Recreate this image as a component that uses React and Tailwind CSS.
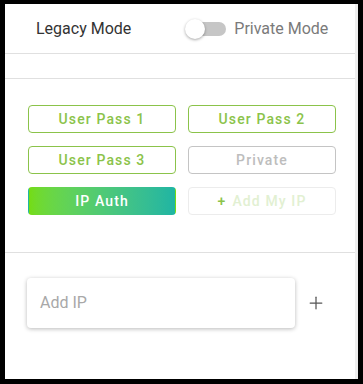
import { Plus } from "lucide-react";

const PassButton = ({ label, variant }) => {
  const styles = {
    outline: "border-[#8bc34a] text-[#8bc34a]",
    muted: "border-[#c4c4c4] text-[#bdbdbd]",
    faint: "border-[#ececec] text-[#e2f0d2]",
    active:
      "border-transparent text-white bg-gradient-to-r from-[#74dc12] to-[#1fb5a3]",
  };
  return (
    <button
      className={`h-[28px] rounded-[4px] border text-[14px] font-medium tracking-[0.08em] flex items-center justify-center ${styles[variant]}`}
    >
      {variant === "faint" ? (
        <>
          <span className="text-[#8bc34a] mr-[6px]">+</span>
          {label}
        </>
      ) : (
        label
      )}
    </button>
  );
};

const App = () => {
  return (
    <div
      className="w-[363px] h-[384px] bg-black pl-[5px] pt-[4px]"
      style={{ fontFamily: "Roboto, 'Liberation Sans', sans-serif" }}
    >
      <div className="w-[353px] h-[375px] bg-white border-r-[3px] border-[#eeeeee] flex flex-col">
        {/* header */}
        <div className="h-[50px] flex items-center border-b border-[#e0e0e0] pl-[31px]">
          <span className="text-[16px] text-[#333333]">Legacy Mode</span>
          <div className="ml-[57px] flex items-center">
            <div className="relative w-[38px] h-[14px] rounded-full bg-[#c6c6c6]">
              <div className="absolute -left-[3px] -top-[3px] w-[20px] h-[20px] rounded-full bg-white shadow-[0_1px_3px_rgba(0,0,0,0.35)]" />
            </div>
            <span className="ml-[8px] text-[16px] text-[#7a7a7a]">
              Private Mode
            </span>
          </div>
        </div>

        <div className="h-[25px] border-b border-[#e0e0e0]" />

        {/* auth buttons */}
        <div className="pt-[26px] pb-[37px] pl-[23px] border-b border-[#e0e0e0]">
          <div className="grid grid-cols-[148px_148px] gap-x-[12px] gap-y-[13px]">
            <PassButton label="User Pass 1" variant="outline" />
            <PassButton label="User Pass 2" variant="outline" />
            <PassButton label="User Pass 3" variant="outline" />
            <PassButton label="Private" variant="muted" />
            <PassButton label="IP Auth" variant="active" />
            <PassButton label="Add My IP" variant="faint" />
          </div>
        </div>

        {/* add ip */}
        <div className="pt-[25px] pl-[22px] flex items-center">
          <div className="w-[268px] h-[50px] rounded-[4px] bg-white shadow-[0_1px_4px_rgba(0,0,0,0.28)] flex items-center px-[13px]">
            <span className="text-[16px] text-[#a8a8a8]">Add IP</span>
          </div>
          <Plus
            className="ml-[11px] text-[#555555]"
            size={20}
            strokeWidth={1.5}
          />
        </div>
      </div>
    </div>
  );
};

export default App;
